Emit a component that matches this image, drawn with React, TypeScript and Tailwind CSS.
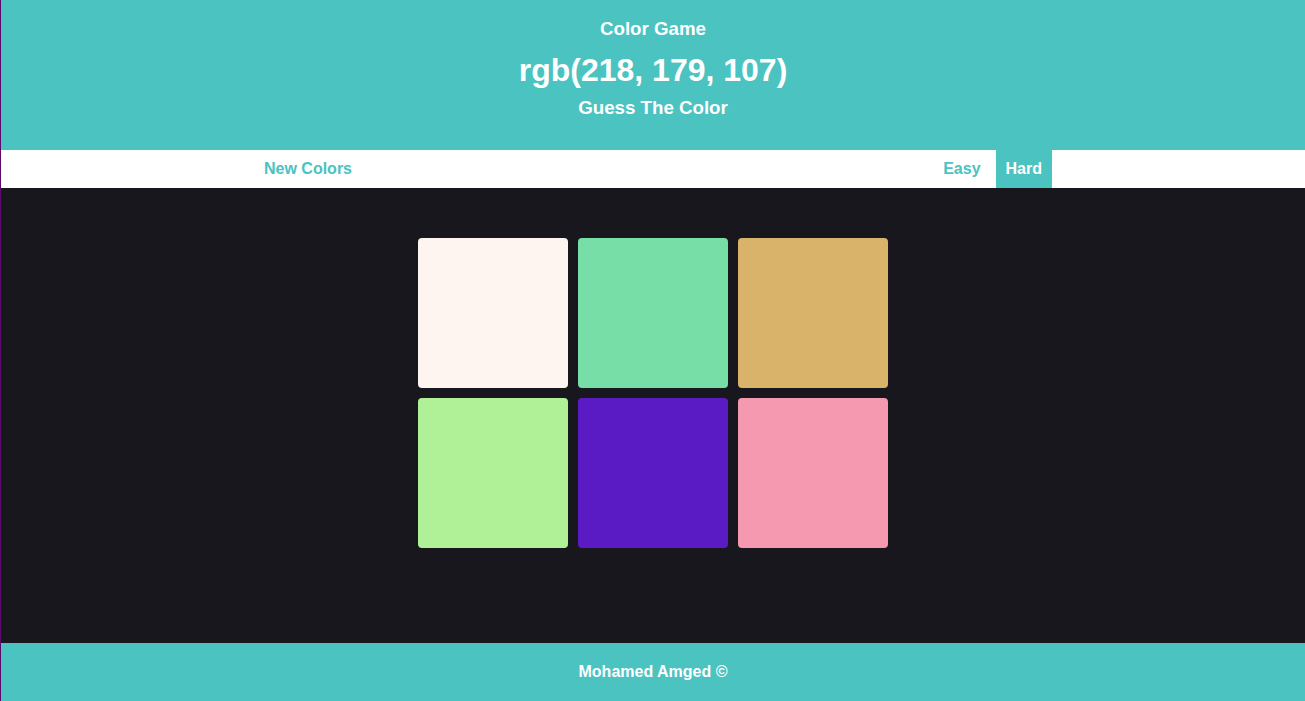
const colors = [
  "#fff5f0",
  "#76dea6",
  "rgb(218, 179, 107)",
  "#b0f198",
  "#5b1bc4",
  "#f499b0",
];

export default function App() {
  return (
    <div
      className="min-h-screen border-l border-[#5b0a6b] bg-[#17171d] text-white"
      style={{ fontFamily: '"Liberation Sans", Arial, sans-serif' }}
    >
      <header className="flex h-[150px] flex-col items-center bg-[#4ac3c1] pt-[18px] font-bold">
        <h3 className="text-[18.72px] leading-[22px]">Color Game</h3>
        <h1 className="mt-[12px] text-[32px] leading-[36px]">rgb(218, 179, 107)</h1>
        <h2 className="mt-[9px] text-[18.72px] leading-[22px]">Guess The Color</h2>
      </header>

      <nav className="h-[38px] bg-white">
        <div className="mx-auto flex h-full w-[798px] items-stretch justify-between text-[16px] font-bold">
          <button className="px-[10px] text-[#4ac3c1]">New Colors</button>
          <div className="flex gap-[5px]">
            <button className="px-[10px] text-[#4ac3c1]">Easy</button>
            <button className="bg-[#4ac3c1] px-[10px] text-white">Hard</button>
          </div>
        </div>
      </nav>

      <main className="flex h-[455px] justify-center pt-[50px]">
        <div className="grid h-fit grid-cols-3 gap-[10px]">
          {colors.map((c) => (
            <div
              key={c}
              className="h-[150px] w-[150px] rounded-[4px]"
              style={{ backgroundColor: c }}
            />
          ))}
        </div>
      </main>

      <footer className="flex h-[58px] items-center justify-center bg-[#4ac3c1] text-[16px] font-bold">
        Mohamed Amged ©
      </footer>
    </div>
  );
}
